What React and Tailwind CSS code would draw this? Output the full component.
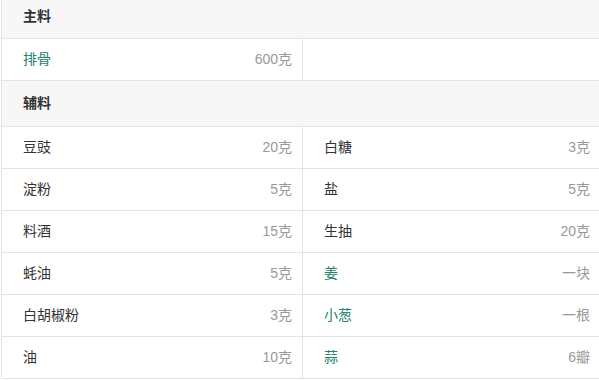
const main = [{ name: '排骨', amount: '600克', link: true }]

const extra = [
  { name: '豆豉', amount: '20克' },
  { name: '白糖', amount: '3克' },
  { name: '淀粉', amount: '5克' },
  { name: '盐', amount: '5克' },
  { name: '料酒', amount: '15克' },
  { name: '生抽', amount: '20克' },
  { name: '蚝油', amount: '5克' },
  { name: '姜', amount: '一块', link: true },
  { name: '白胡椒粉', amount: '3克' },
  { name: '小葱', amount: '一根', link: true },
  { name: '油', amount: '10克' },
  { name: '蒜', amount: '6瓣', link: true },
]

function Cell({ item, index }) {
  const left = index % 2 === 0
  return (
    <div
      className={
        'h-[42px] flex items-center justify-between pl-[21px] border-b border-[#e3e3e3] ' +
        (left ? 'border-r pr-[10px]' : 'pr-[9px]')
      }
    >
      {item ? (
        <>
          <span className={item.link ? 'text-[#23806d]' : 'text-[#333]'}>{item.name}</span>
          <span className="text-[#999]">{item.amount}</span>
        </>
      ) : null}
    </div>
  )
}

export default function App() {
  return (
    <div
      className="ml-[1px] border-l border-[#e3e3e3] bg-white text-[14px]"
      style={{ fontFamily: '"Liberation Sans", "Noto Sans CJK SC", sans-serif' }}
    >
      <div className="h-[39px] pb-[5px] flex items-center pl-[21px] bg-[#f7f7f7] border-b border-[#e3e3e3] font-bold text-[#333]">
        主料
      </div>
      <div className="grid grid-cols-[301px_1fr]">
        <Cell item={main[0]} index={0} />
        <Cell item={null} index={1} />
      </div>
      <div className="h-[46px] flex items-center pl-[21px] bg-[#f7f7f7] border-b border-[#e3e3e3] font-bold text-[#333]">
        辅料
      </div>
      <div className="grid grid-cols-[301px_1fr]">
        {extra.map((item, i) => (
          <Cell key={item.name} item={item} index={i} />
        ))}
      </div>
    </div>
  )
}
